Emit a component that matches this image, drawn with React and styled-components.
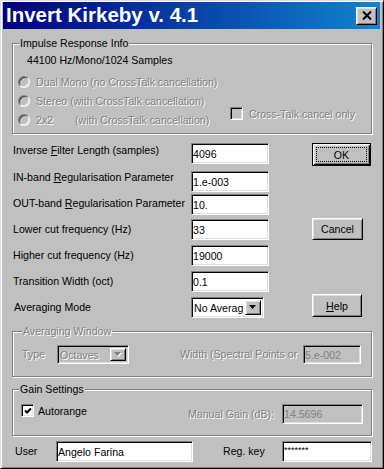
import styled, { createGlobalStyle, css } from 'styled-components';

const GlobalStyle = createGlobalStyle`
  * { box-sizing: border-box; }
  html, body { margin: 0; padding: 0; background: #c0c0c0; }
  body {
    font-family: "Liberation Sans", Arial, sans-serif;
    font-size: 10.6px;
    color: #000;
  }
  u { text-decoration-thickness: 1px; text-underline-offset: 1px; }
`;

// win9x bevels
const raised = css`
  border: 1px solid;
  border-color: #fff #000 #000 #fff;
  box-shadow: inset 1px 1px 0 #dfdfdf, inset -1px -1px 0 #808080;
`;

const sunken = css`
  border: 1px solid;
  border-color: #808080 #fff #fff #808080;
  box-shadow: inset 1px 1px 0 #000, inset -1px -1px 0 #dfdfdf;
`;

const disabledText = css`
  color: #808080;
  text-shadow: 1px 1px 0 #fff;
`;

const Window = styled.div`
  width: 384px;
  height: 469px;
  padding: 1px 3px 0 2px;
  border: 1px solid;
  border-color: #dfdfdf #000 #000 #dfdfdf;
  box-shadow: inset 1px 1px 0 #fff, inset -1px -1px 0 #808080;
  background: #c0c0c0;
  overflow: hidden;
`;

const TitleBar = styled.div`
  height: 27px;
  display: flex;
  align-items: center;
  justify-content: space-between;
  padding: 0 3px;
  background: linear-gradient(to right, #000080, #1084d0);
  color: #fff;
`;

const TitleText = styled.span`
  font-weight: bold;
  font-size: 20.5px;
  line-height: 1;
`;

const CloseButton = styled.div`
  ${raised}
  width: 21px;
  height: 18px;
  background: #c0c0c0;
  display: flex;
  align-items: center;
  justify-content: center;
`;

const Content = styled.div`
  padding: 8px 8px 0 9px;
  display: flex;
  flex-direction: column;
`;

// group boxes
const Group = styled.fieldset`
  margin: ${p => p.$top || 0}px 0 0;
  padding: 0;
  min-width: 0;
  border: 1px solid #808080;
  box-shadow: 1px 1px 0 #fff, inset 1px 1px 0 #fff;
`;

const Legend = styled.legend`
  margin-left: ${p => p.$indent || 6}px;
  padding: 0 1px;
  line-height: 13px;
  background: #c0c0c0;
  ${p => p.$disabled && disabledText}
`;

const GroupBody = styled.div`
  padding: ${p => p.$pad};
`;

const InfoLine = styled.div`
  margin: 4px 0 0 9px;
  line-height: 13px;
`;

const Options = styled.div`
  display: grid;
  grid-template-columns: 212px auto;
  margin-top: 5px;
`;

const RadioList = styled.div`
  display: flex;
  flex-direction: column;
`;

const RadioRow = styled.div`
  height: 19px;
  display: flex;
  align-items: center;
  gap: 6px;
  white-space: nowrap;
  ${disabledText}
`;

const RadioDot = styled.span`
  flex-shrink: 0;
  width: 12px;
  height: 12px;
  border-radius: 50%;
  border: 1px solid;
  border-color: #808080 #fff #fff #808080;
  box-shadow: inset 1px 1px 0 #404040, inset -1px -1px 0 #dfdfdf;
  background: #c0c0c0;
`;

const Spaced = styled.span`
  display: inline-block;
  width: ${p => p.$w}px;
`;

const CheckRow = styled.div`
  display: flex;
  align-items: center;
  gap: ${p => p.$gap || 6}px;
  margin-top: ${p => p.$top || 0}px;
  align-self: start;
  white-space: nowrap;
  ${p => p.$disabled && disabledText}
`;

const CheckBox = styled.span`
  ${sunken}
  flex-shrink: 0;
  width: 13px;
  height: 13px;
  display: inline-flex;
  align-items: center;
  justify-content: center;
  background: ${p => (p.$disabled ? '#c0c0c0' : '#fff')};
`;

// main form
const MainSection = styled.div`
  display: flex;
  margin-top: 9px;
`;

const FormCol = styled.div`
  width: 257px;
  display: flex;
  flex-direction: column;
`;

const Row = styled.div`
  display: flex;
  align-items: center;
  margin-top: ${p => p.$gap || 0}px;
`;

const Label = styled.span`
  flex-shrink: 0;
  width: ${p => (p.$w ? `${p.$w}px` : 'auto')};
  margin-left: ${p => (p.$ml === 'auto' ? 'auto' : `${p.$ml || 0}px`)};
  padding-left: ${p => p.$indent || 0}px;
  margin-bottom: ${p => (p.$lift || 0) * 2}px;
  line-height: 13px;
  white-space: nowrap;
  ${p => p.$disabled && disabledText}
`;

const Field = styled.div`
  ${sunken}
  flex-shrink: 0;
  width: ${p => p.$w}px;
  height: ${p => p.$h || 21}px;
  padding: ${p => (p.$top ? '3px 1px 0' : '0 1px')};
  display: flex;
  align-items: ${p => (p.$top ? 'flex-start' : 'center')};
  white-space: nowrap;
  overflow: hidden;
  background: ${p => (p.$disabled ? '#c0c0c0' : '#fff')};
  color: ${p => (p.$disabled ? '#808080' : '#000')};
  font-size: ${p => p.$size || 10.6}px;
`;

const Combo = styled.div`
  ${sunken}
  flex-shrink: 0;
  width: ${p => p.$w}px;
  height: ${p => p.$h}px;
  padding: 2px;
  display: flex;
  background: ${p => (p.$disabled ? '#c0c0c0' : '#fff')};
`;

const ComboText = styled.span`
  flex: 1;
  min-width: 0;
  display: flex;
  align-items: center;
  white-space: nowrap;
  ${p => p.$disabled && disabledText}
`;

const ComboButton = styled.span`
  ${raised}
  flex-shrink: 0;
  width: 16px;
  display: flex;
  align-items: center;
  justify-content: center;
  background: #c0c0c0;
`;

const ButtonCol = styled.div`
  margin-left: 43px;
  display: flex;
  flex-direction: column;
`;

const PushButton = styled.div`
  ${raised}
  width: ${p => p.$w}px;
  height: ${p => p.$h}px;
  margin-top: ${p => p.$top || 0}px;
  display: flex;
  align-items: center;
  justify-content: center;
  background: #c0c0c0;
  ${p =>
    p.$default &&
    css`
      border: 1px solid #000;
      box-shadow: inset 1px 1px 0 #fff, inset -1px -1px 0 #000,
        inset 2px 2px 0 #dfdfdf, inset -2px -2px 0 #808080;
    `}
`;

const FocusRect = styled.span`
  flex: 1;
  align-self: stretch;
  margin: 3px;
  border: 1px dotted #000;
  display: flex;
  align-items: center;
  justify-content: center;
`;

const UserRow = styled.div`
  display: flex;
  align-items: center;
  margin-top: 5px;
  padding-left: 3px;
`;

const CloseGlyph = () => (
  <svg width="10" height="9" viewBox="0 0 10 9">
    <path d="M1 0.5 L9 8.5 M9 0.5 L1 8.5" stroke="#000" strokeWidth="2" fill="none" />
  </svg>
);

const Arrow = ({ disabled }) => (
  <svg width="8" height="5" viewBox="0 0 8 5">
    {disabled && <polygon points="1,1 8,1 4.5,5" fill="#fff" />}
    <polygon points="0,0 7,0 3.5,4" fill={disabled ? '#808080' : '#000'} />
  </svg>
);

const Tick = () => (
  <svg width="8" height="8" viewBox="0 0 8 8">
    <path d="M1 3.5 L3 5.5 L7 1.5" stroke="#000" strokeWidth="2" fill="none" />
  </svg>
);

const formRows = [
  { label: <>Inverse <u>F</u>ilter Length (samples)</>, value: '4096', gap: 0, lift: 3 },
  { label: <>IN-band <u>R</u>egularisation Parameter</>, value: '1.e-003', gap: 7, lift: 4 },
  { label: <>OUT-band <u>R</u>egularisation Parameter</>, value: '10.', gap: 2, lift: 1 },
  { label: 'Lower cut frequency (Hz)', value: '33', gap: 4 },
  { label: 'Higher cut frequency (Hz)', value: '19000', gap: 5 },
  { label: 'Transition Width (oct)', value: '0.1', gap: 5 },
];

const App = () => {
  return (
    <>
      <GlobalStyle />
      <Window>
        <TitleBar>
          <TitleText>Invert Kirkeby v. 4.1</TitleText>
          <CloseButton>
            <CloseGlyph />
          </CloseButton>
        </TitleBar>

        <Content>
          <Group>
            <Legend>Impulse Response Info</Legend>
            <GroupBody $pad="0 0 4px 5px">
              <InfoLine>44100 Hz/Mono/1024 Samples</InfoLine>
              <Options>
                <RadioList>
                  <RadioRow>
                    <RadioDot />
                    Dual Mono (no CrossTalk cancellation)
                  </RadioRow>
                  <RadioRow>
                    <RadioDot />
                    Stereo (with CrossTalk cancellation)
                  </RadioRow>
                  <RadioRow>
                    <RadioDot />
                    <span>
                      <Spaced $w={39}>2x2</Spaced>(with CrossTalk cancellation)
                    </span>
                  </RadioRow>
                </RadioList>
                <CheckRow $top={35} $gap={6} $disabled>
                  <CheckBox $disabled />
                  Cross-Talk cancel only
                </CheckRow>
              </Options>
            </GroupBody>
          </Group>

          <MainSection>
            <FormCol>
              {formRows.map((row, i) => (
                <Row key={i} $gap={row.gap}>
                  <Label $w={179} $indent={1} $lift={row.lift}>
                    {row.label}
                  </Label>
                  <Field $w={78}>{row.value}</Field>
                </Row>
              ))}
              <Row $gap={5}>
                <Label $w={179} $indent={2}>
                  Averaging Mode
                </Label>
                <Combo $w={73} $h={21}>
                  <ComboText>No Averag</ComboText>
                  <ComboButton>
                    <Arrow />
                  </ComboButton>
                </Combo>
              </Row>
            </FormCol>

            <ButtonCol>
              <PushButton $default $w={59} $h={23}>
                <FocusRect>OK</FocusRect>
              </PushButton>
              <PushButton $w={51} $h={22} $top={52}>
                Cancel
              </PushButton>
              <PushButton $w={50} $h={23} $top={54}>
                <span>
                  <u>H</u>elp
                </span>
              </PushButton>
            </ButtonCol>
          </MainSection>

          <Group $top={7}>
            <Legend $indent={9} $disabled>
              Averaging Window
            </Legend>
            <GroupBody $pad="0 0 12px 9px">
              <Row $gap={7}>
                <Label $w={35} $disabled>
                  Type
                </Label>
                <Combo $w={72} $h={19} $disabled>
                  <ComboText $disabled>Octaves</ComboText>
                  <ComboButton>
                    <Arrow disabled />
                  </ComboButton>
                </Combo>
                <Label $w={123} $ml={51} $disabled>
                  Width (Spectral Points or
                </Label>
                <Field $w={58} $h={19} $disabled>
                  5.e-002
                </Field>
              </Row>
            </GroupBody>
          </Group>

          <Group $top={6}>
            <Legend>Gain Settings</Legend>
            <GroupBody $pad="0 8px 11px 8px">
              <Row $gap={8}>
                <CheckRow $gap={4}>
                  <CheckBox>
                    <Tick />
                  </CheckBox>
                  Autorange
                </CheckRow>
                <Label $w={94} $ml="auto" $disabled>
                  Manual Gain (dB):
                </Label>
                <Field $w={81} $h={20} $disabled>
                  14.5696
                </Field>
              </Row>
            </GroupBody>
          </Group>

          <UserRow>
            <Label $w={41}>User</Label>
            <Field $w={137}>Angelo Farina</Field>
            <Label $w={59} $ml={30}>
              Reg. key
            </Label>
            <Field $w={90} $size={9} $top>
              *******
            </Field>
          </UserRow>
        </Content>
      </Window>
    </>
  );
};

export default App;
